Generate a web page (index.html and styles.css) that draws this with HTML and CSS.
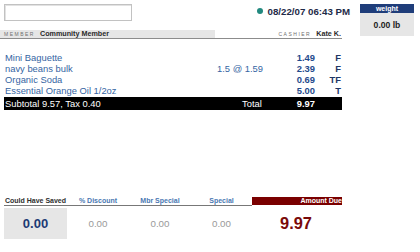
FILE: index.html
```
<!DOCTYPE html>
<html>
<head>
<meta charset="utf-8">
<link rel="stylesheet" href="styles.css">
</head>
<body>
<div class="screen">
  <div class="main">
    <div class="top">
      <div class="field"></div>
      <div class="clock"><span class="dot"></span><span class="datetime">08/22/07 06:43 PM</span></div>
    </div>
    <div class="idbar">
      <div class="member"><span class="label">MEMBER</span><span class="who">Community Member</span></div>
      <div class="cashier"><span class="label">CASHIER</span><span class="who">Kate K.</span></div>
    </div>
    <div class="items">
      <div class="row"><span class="desc">Mini Baguette</span><span class="qty"></span><span class="price">1.49</span><span class="flag">F</span></div>
      <div class="row"><span class="desc">navy beans bulk</span><span class="qty">1.5 @ 1.59</span><span class="price">2.39</span><span class="flag">F</span></div>
      <div class="row"><span class="desc">Organic Soda</span><span class="qty"></span><span class="price">0.69</span><span class="flag">TF</span></div>
      <div class="row"><span class="desc">Essential Orange Oil 1/2oz</span><span class="qty"></span><span class="price">5.00</span><span class="flag">T</span></div>
      <div class="row total"><span class="desc">Subtotal 9.57, Tax 0.40</span><span class="qty total-label">Total</span><span class="price">9.97</span><span class="flag"></span></div>
    </div>
    <div class="summary">
      <div class="head dark">Could Have Saved</div>
      <div class="head">% Discount</div>
      <div class="head">Mbr Special</div>
      <div class="head">Special</div>
      <div class="head due">Amount Due</div>
      <div class="val saved">0.00</div>
      <div class="val">0.00</div>
      <div class="val">0.00</div>
      <div class="val">0.00</div>
      <div class="val amount">9.97</div>
    </div>
  </div>
  <div class="scale">
    <div class="scale-head">weight</div>
    <div class="scale-val">0.00 lb</div>
  </div>
</div>
</body>
</html>
```
FILE: styles.css
```
html, body {
  margin: 0;
  padding: 0;
  background: #fff;
}
body {
  font-family: "Liberation Sans", Arial, sans-serif;
  width: 420px;
  height: 252px;
  overflow: hidden;
}
.screen {
  display: grid;
  grid-template-columns: 352px 54px;
  column-gap: 8px;
  padding-top: 4px;
  align-items: start;
}
.main {
  display: flex;
  flex-direction: column;
}
.top {
  display: flex;
  justify-content: space-between;
  align-items: center;
  height: 17px;
  padding-left: 4px;
  padding-right: 2px;
}
.field {
  width: 126px;
  height: 15px;
  border: 1px solid #c2c2c2;
  box-shadow: inset 1px 1px 0 #e2e2e2;
  background: #fff;
}
.clock {
  display: flex;
  align-items: center;
  gap: 5px;
  margin-top: -3px;
}
.dot {
  width: 6px;
  height: 6px;
  border-radius: 50%;
  background: #22897f;
}
.datetime {
  font-weight: bold;
  font-size: 9.7px;
  color: #1e2a48;
}
.idbar {
  display: flex;
  width: 342px;
  height: 8px;
  margin-top: 9px;
  border-bottom: 1px solid #8c8c8c;
  line-height: 8px;
}
.member {
  width: 211px;
  padding-left: 4px;
  background: #e6e6e6;
  display: flex;
  align-items: center;
  gap: 5px;
}
.cashier {
  flex: 1;
  display: flex;
  justify-content: flex-end;
  align-items: center;
  gap: 5px;
  padding-right: 1px;
}
.label {
  font-size: 5px;
  letter-spacing: 1.5px;
  color: #707070;
}
.who {
  font-size: 7.2px;
  font-weight: bold;
  color: #2a2a2a;
}
.items {
  margin-top: 13px;
  margin-left: 4px;
  width: 338px;
  display: flex;
  flex-direction: column;
}
.row {
  display: grid;
  grid-template-columns: 213px 60px 38px 26px;
  height: 11px;
  line-height: 11px;
  font-size: 9.4px;
  color: #3565a3;
}
.desc {
  padding-left: 1px;
  white-space: nowrap;
}
.price {
  text-align: right;
  font-weight: bold;
  color: #1f4a8c;
}
.flag {
  text-align: right;
  font-weight: bold;
  color: #1e3766;
}
.row.total {
  margin-top: 1px;
  height: 13px;
  line-height: 13px;
  background: #000;
  color: #fff;
}
.row.total .price {
  color: #fff;
}
.total-label {
  padding-left: 25px;
}
.summary {
  margin-top: 87px;
  margin-left: 4px;
  width: 338px;
  display: grid;
  grid-template-columns: 63px 62px 62px 61px 90px;
  grid-template-rows: 9px 31px;
  row-gap: 2px;
}
.head {
  height: 8px;
  line-height: 8px;
  border-bottom: 1px solid #777;
  font-size: 7px;
  font-weight: bold;
  color: #4a78b2;
  text-align: center;
  white-space: nowrap;
}
.head.dark {
  color: #2e2e2e;
}
.head.due {
  border-bottom: none;
  background: #7a0000;
  color: #fff;
  text-align: right;
  overflow: hidden;
  padding-right: 0;
}
.val {
  display: flex;
  align-items: center;
  justify-content: center;
  font-size: 9.8px;
  color: #9a9a9a;
}
.val.saved {
  background: #e6e6e6;
  font-size: 13px;
  font-weight: bold;
  color: #1c3a74;
}
.val.amount {
  font-size: 16.4px;
  font-weight: bold;
  color: #7a0a0a;
  padding-right: 2px;
}
.scale {
  display: flex;
  flex-direction: column;
  height: 32px;
}
.scale-head {
  height: 9px;
  line-height: 9px;
  background: #1f3d7a;
  color: #fff;
  font-size: 7px;
  font-weight: bold;
  text-align: center;
}
.scale-val {
  flex: 1;
  background: #e6e6e6;
  display: flex;
  align-items: center;
  justify-content: center;
  font-size: 8.6px;
  font-weight: bold;
  color: #222;
}
```
